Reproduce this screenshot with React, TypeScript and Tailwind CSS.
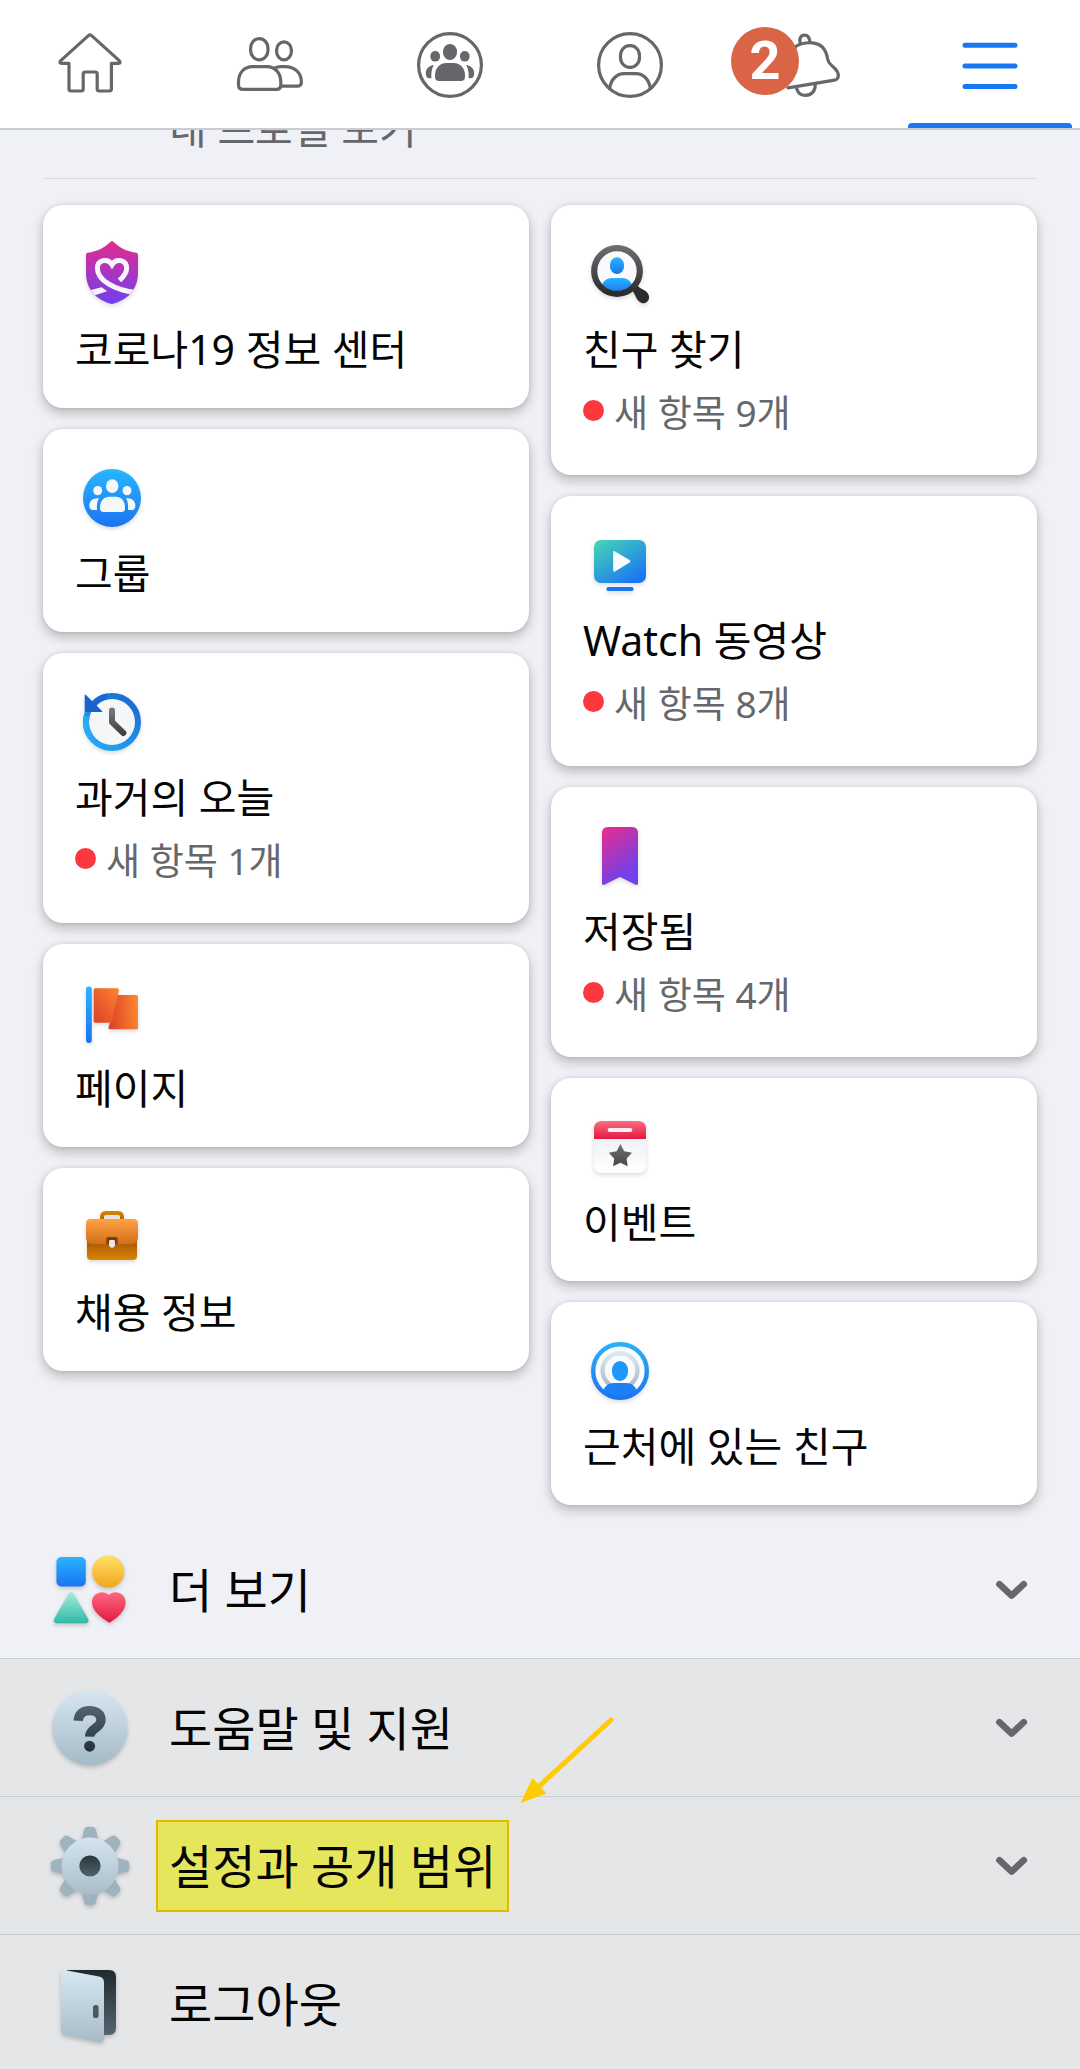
import React from 'react';

interface MenuCardData {
    label: string;
    icon: React.ReactNode;
    newItems?: number;
}

interface MenuRowProps {
    label: string;
    icon: React.ReactNode;
    expandable?: boolean;
    highlighted?: boolean;
    className?: string;
}

interface GradientProps {
    id: string;
    from: string;
    to: string;
}

const Gradient: React.FC<GradientProps> = ({ id, from, to }) => (
    <linearGradient id={id} x1="0" y1="0" x2="0" y2="1">
        <stop offset="0" stopColor={from} />
        <stop offset="1" stopColor={to} />
    </linearGradient>
);

/* ---------- top tab icons ---------- */

const TabIcon: React.FC<{ children: React.ReactNode; className?: string }> = ({
    children,
    className = 'text-[#65676b]'
}) => (
    <svg
        viewBox="0 0 80 80"
        className={`size-20 ${className}`}
        fill="none"
        stroke="currentColor"
        strokeWidth="3.2"
        strokeLinecap="round"
        strokeLinejoin="round"
        aria-hidden="true"
    >
        {children}
    </svg>
);

const HomeIcon = () => (
    <TabIcon>
        <path d="M38.4 11.6Q40 10.2 41.6 11.6L69 36.4Q71.6 39.4 68.2 39.4H61.4V65Q61.4 67 59.4 67H49.2Q47.2 67 47.2 65V50Q47.2 48 45.2 48H35.2Q33.2 48 33.2 50V65Q33.2 67 31.2 67H21Q19 67 19 65V39.4H11.8Q8.4 39.4 11 36.4Z" />
    </TabIcon>
);

const FriendsIcon = () => (
    <TabIcon>
        <rect x="20.6" y="14.6" width="17.4" height="21.2" rx="8.7" ry="9.6" />
        <rect x="46.6" y="17.9" width="14.8" height="17.9" rx="7.4" ry="8.2" />
        <path d="M8.5 58C8.5 48.5 14.5 42.6 22.5 42.6H37C45 42.6 50.8 49 50.8 58V61Q50.8 65.4 46.4 65.4H13Q8.5 65.4 8.5 61Z" />
        <path d="M44.6 44.2Q47.4 42.6 51 42.6H55C65 42.6 71.4 49 71.4 58Q71.4 62.2 67 62.2H51.4" />
    </TabIcon>
);

const GroupsIcon = () => (
    <TabIcon>
        <circle cx="40" cy="41" r="31.4" />
        <g fill="currentColor" stroke="none">
            <rect x="33" y="20" width="14" height="16" rx="7" ry="7.6" />
            <rect x="20.4" y="27" width="9.6" height="10.6" rx="4.8" />
            <rect x="50" y="27" width="9.6" height="10.6" rx="4.8" />
            <path d="M25 51C25 44 30 39 36 39H44C50 39 55 44 55 51V53Q55 57 51 57H29Q25 57 25 53Z" />
            <path d="M23.8 41C19 41.5 15.8 45 15.8 49Q15.8 54.3 19.5 54.3H21.4C21 49 21.6 45 23.8 41Z" />
            <path d="M56.2 41C61 41.5 64.2 45 64.2 49Q64.2 54.3 60.5 54.3H58.6C59 49 58.4 45 56.2 41Z" />
        </g>
    </TabIcon>
);

const ProfileIcon = () => (
    <TabIcon>
        <circle cx="40" cy="41" r="31.4" />
        <rect x="30.5" y="21.6" width="19" height="21.8" rx="9.2" ry="10" />
        <path d="M19.6 64.6C21 55 27 49.6 34 49.6H46C53 49.6 59 55 60.4 64.6" />
    </TabIcon>
);

const BellIcon = () => (
    <TabIcon>
        <path d="M30.4 19.5C28.6 14.4 31 11.2 34.6 11.2C38 11.2 39.4 13.6 39.8 17.4" />
        <path d="M18 63.8L64.6 56.2C69.6 55 69.4 49 65 44.6C60 39.6 58.6 40 57.6 35C56.4 27 53 19.4 42 18.8C35 18.4 29 20 25 23" />
        <path d="M26.6 64.4C28 68.8 31 71.4 35.4 71.4C41.4 71.4 45.6 67 45.2 60.6" />
    </TabIcon>
);

const HamburgerIcon = () => (
    <TabIcon className="text-[#1877f2]">
        <path strokeWidth="5" d="M15 21.2H65M15 42H65M15 62.6H65" />
    </TabIcon>
);

/* ---------- card icons ---------- */

const CardIcon: React.FC<{ children: React.ReactNode }> = ({ children }) => (
    <svg
        viewBox="0 0 74 74"
        className="size-[74px] drop-shadow-[0_2px_2px_rgba(0,0,0,0.15)]"
        fill="none"
        aria-hidden="true"
    >
        {children}
    </svg>
);

const SHIELD = 'M35.6 4.8Q37 3.4 38.4 4.8C45 11.4 52 14.4 61.4 15.8Q63 16.1 63 17.8V36C63 52 53 63 37 67C21 63 11 52 11 36V17.8Q11 16.1 12.6 15.8C22 14.4 29 11.4 35.6 4.8Z';

const CovidIcon = () => (
    <CardIcon>
        <defs>
            <Gradient id="shield" from="#e42c8f" to="#6f3ff0" />
            <clipPath id="shieldClip">
                <path d={SHIELD} />
            </clipPath>
        </defs>
        <path d={SHIELD} fill="url(#shield)" />
        <g clipPath="url(#shieldClip)">
            <path
                d="M44.4 43.4C48.6 39.6 51.6 36 51.6 31.4C51.6 22.4 41 21 37 27.6C33 21 22.4 22.4 22.4 31.4C22.4 42.4 39 53.8 62 55.6"
                stroke="#f7f5fb"
                strokeWidth="5"
            />
            <path d="M10 54.6L26.6 50.2L32.2 54.2L19 58.4Z" fill="#f7f5fb" />
        </g>
    </CardIcon>
);

const GroupCardIcon = () => (
    <CardIcon>
        <defs>
            <Gradient id="groupBlue" from="#28b6ff" to="#1b74f2" />
        </defs>
        <circle cx="37" cy="37" r="29" fill="url(#groupBlue)" />
        <g fill="#f5f8fb">
            <rect x="31" y="18.3" width="12.4" height="13.8" rx="6.2" ry="6.8" />
            <rect x="18.3" y="25" width="8.8" height="9.2" rx="4.4" />
            <rect x="47.6" y="25" width="8.8" height="9.2" rx="4.4" />
            <path d="M25 46.4C25 39.6 29.4 35.7 34 35.7H41C45.6 35.7 50 39.6 50 46.4V47.6Q50 51 46.6 51H28.4Q25 51 25 47.6Z" />
            <path d="M24 37.3C18 36.6 14.3 40 14.3 44.6Q14.3 49 18 49H22C21.6 44 22 40.6 24 37.3Z" />
            <path d="M51 37.3C57 36.6 60.4 40 60.4 44.6Q60.4 49 57 49H53C53.4 44 53 40.6 51 37.3Z" />
        </g>
    </CardIcon>
);

const HistoryIcon = () => (
    <CardIcon>
        <defs>
            <linearGradient id="historyRing" x1="1" y1="0" x2="0.3" y2="1">
                <stop offset="0" stopColor="#1a66d2" />
                <stop offset="1" stopColor="#25a4f2" />
            </linearGradient>
            <Gradient id="historyHands" from="#75777a" to="#3f4042" />
        </defs>
        <circle cx="37" cy="37" r="24" fill="#f5f6f8" />
        <circle cx="37" cy="37" r="26" stroke="url(#historyRing)" strokeWidth="6" />
        <path d="M11.4 31.5A26 26 0 0 0 16 52" stroke="#28aaf5" strokeWidth="6" />
        <path d="M17 20L23 26" stroke="#fff" strokeWidth="10" />
        <path d="M18.4 19.8C22 15.4 26 12.6 32 11.4" stroke="#1a66d2" strokeWidth="6" />
        <path d="M9.7 10.6Q9.7 8.8 11 10L26.8 25.8Q28 27 26 27H9.7Z" fill="#1a60d0" />
        <path
            d="M37 25.6V37L48.4 48"
            stroke="url(#historyHands)"
            strokeWidth="6"
            strokeLinecap="round"
            strokeLinejoin="round"
        />
    </CardIcon>
);

const PagesIcon = () => (
    <CardIcon>
        <defs>
            <Gradient id="pole" from="#2ab4ff" to="#1b72f0" />
            <linearGradient id="flagFront" x1="1" y1="0" x2="0" y2="1">
                <stop offset="0" stopColor="#fd832d" />
                <stop offset="1" stopColor="#dd412a" />
            </linearGradient>
            <linearGradient id="flagBack" x1="0" y1="0.5" x2="1" y2="0.4">
                <stop offset="0" stopColor="#dd412a" />
                <stop offset="1" stopColor="#fe872e" />
            </linearGradient>
        </defs>
        <rect x="11" y="10.6" width="5.8" height="56.4" rx="2.9" fill="url(#pole)" />
        <path d="M42 19H61.4Q63 19 63 20.6V51.7Q63 53.3 61.4 53.3H35Q33.2 53.3 33.6 51.6Z" fill="url(#flagBack)" />
        <path d="M20.4 12.3H42Q44.2 12.3 43.9 14.6L36.4 46.7H20.4Q18.7 46.7 18.7 45V14Q18.7 12.3 20.4 12.3Z" fill="url(#flagFront)" />
    </CardIcon>
);

const JobsIcon = () => (
    <CardIcon>
        <defs>
            <Gradient id="caseFlap" from="#ffa346" to="#d26f1a" />
            <Gradient id="caseBody" from="#8d3b02" to="#d98704" />
            <Gradient id="caseHandle" from="#d38205" to="#b16002" />
        </defs>
        <rect x="28" y="14" width="18" height="7" fill="#e4e4e6" />
        <path d="M27 21V17Q27 13 31 13H43Q47 13 47 17V21" stroke="url(#caseHandle)" strokeWidth="4" />
        <path d="M12 30H62V56Q62 60 58 60H16Q12 60 12 56Z" fill="url(#caseBody)" />
        <path d="M15.5 19H58.5Q63 19 63 23.5V37Q63 44 56.6 44H17.4Q11 44 11 37V23.5Q11 19 15.5 19Z" fill="url(#caseFlap)" />
        <path d="M31.3 44V39Q31.3 37 33.3 37H40.7Q42.7 37 42.7 39V44Z" fill="#7f3b0a" />
        <path d="M34 41.4Q34 40 35.4 40H38.6Q40 40 40 41.4V44.6Q40 47.7 37 47.7Q34 47.7 34 44.6Z" fill="#e6e6e8" />
    </CardIcon>
);

const FindFriendsIcon = () => (
    <CardIcon>
        <defs>
            <Gradient id="lens" from="#6a6b6e" to="#2a2b2d" />
            <Gradient id="lensPerson" from="#29b3ff" to="#1b74f2" />
            <clipPath id="lensClip">
                <circle cx="34" cy="34" r="20" />
            </clipPath>
        </defs>
        <path d="M48 52L52.6 46.4C55 50 58 51.4 62.6 54C66.6 57 67 61.6 64.4 64.4C61.4 67.2 57.4 66.6 54.6 63C52 58.6 51 55.4 48 52Z" fill="#2b2c2e" />
        <circle cx="34" cy="34" r="20" fill="#f8fafc" />
        <g clipPath="url(#lensClip)" fill="url(#lensPerson)">
            <rect x="27" y="20.3" width="14" height="16.8" rx="7" ry="7.6" />
            <path d="M18 50C20 44 24 41 28.6 41H39.4C44 41 48 44 50 50V56H18Z" />
        </g>
        <circle cx="34" cy="34" r="22.8" stroke="url(#lens)" strokeWidth="6.2" />
    </CardIcon>
);

const WatchIcon = () => (
    <CardIcon>
        <defs>
            <linearGradient id="screen" x1="0.1" y1="0" x2="0.8" y2="0.95">
                <stop offset="0" stopColor="#45d3b6" />
                <stop offset="1" stopColor="#1a76f2" />
            </linearGradient>
        </defs>
        <rect x="11" y="12" width="52" height="43" rx="7" fill="url(#screen)" />
        <path d="M30.2 24.4Q30.2 22.4 32 23.4L46.6 32Q48.4 33.3 46.6 34.6L32 43.4Q30.2 44.4 30.2 42.4Z" fill="#f8fbff" />
        <rect x="23.3" y="59" width="27.4" height="4" rx="2" fill="#1b76ee" />
    </CardIcon>
);

const SavedIcon = () => (
    <CardIcon>
        <defs>
            <linearGradient id="bookmark" x1="0.2" y1="0" x2="0.6" y2="0.85">
                <stop offset="0" stopColor="#e22d92" />
                <stop offset="1" stopColor="#7340ea" />
            </linearGradient>
        </defs>
        <path d="M25 8H49Q55 8 55 14V64Q55 67 52.2 65.6L37 58L21.8 65.6Q19 67 19 64V14Q19 8 25 8Z" fill="url(#bookmark)" />
    </CardIcon>
);

const EventsIcon = () => (
    <CardIcon>
        <defs>
            <Gradient id="calTop" from="#ff6a82" to="#e01b40" />
            <Gradient id="calPage" from="#eff1f4" to="#ffffff" />
            <Gradient id="calStar" from="#6c6e71" to="#46484a" />
        </defs>
        <path d="M11 28H63V56Q63 63 56 63H18Q11 63 11 56Z" fill="url(#calPage)" />
        <path d="M19 11H55Q63 11 63 19V29H11V19Q11 11 19 11Z" fill="url(#calTop)" />
        <rect x="24.6" y="18" width="24.8" height="4" rx="2" fill="#ffeef1" />
        <path
            d="M37.4 34L41.2 41.2L49 42.7L43.6 48.4L44.7 56.2L37.4 52.8L30.1 56.2L31.2 48.4L25.8 42.7L33.6 41.2Z"
            fill="url(#calStar)"
        />
    </CardIcon>
);

const NearbyIcon = () => (
    <CardIcon>
        <defs>
            <Gradient id="nearRing" from="#2cb0f5" to="#1b74f2" />
            <Gradient id="nearInner" from="#dce8ef" to="#a8b9c4" />
            <clipPath id="nearClip">
                <circle cx="37" cy="37" r="28" />
            </clipPath>
        </defs>
        <circle cx="37" cy="37" r="27" fill="#f9fbfc" />
        <circle cx="37" cy="36.6" r="17.4" stroke="url(#nearInner)" strokeWidth="4.4" />
        <rect x="29" y="27" width="16" height="20" rx="8" ry="9" fill="#2196fa" />
        <path
            d="M20 58C21 52 26 49 31 49H43C48 49 53 52 54 58V68H20Z"
            fill="#1b7ff5"
            clipPath="url(#nearClip)"
        />
        <circle cx="37" cy="37" r="26.8" stroke="url(#nearRing)" strokeWidth="4.4" />
    </CardIcon>
);

/* ---------- list icons ---------- */

const RowIcon: React.FC<{ children: React.ReactNode }> = ({ children }) => (
    <svg
        viewBox="0 0 80 80"
        className="size-20 shrink-0 overflow-visible drop-shadow-[0_2px_2px_rgba(0,0,0,0.2)]"
        fill="none"
        aria-hidden="true"
    >
        {children}
    </svg>
);

const ShapesIcon = () => (
    <RowIcon>
        <defs>
            <Gradient id="shapeBlue" from="#29b4ff" to="#1a74f1" />
            <Gradient id="shapeYellow" from="#ffe268" to="#f2a51c" />
            <Gradient id="shapeGreen" from="#a2ecdd" to="#31b9a5" />
            <Gradient id="shapeRed" from="#ff6681" to="#e01a3f" />
        </defs>
        <rect x="6.4" y="7" width="29.4" height="29.4" rx="5" fill="url(#shapeBlue)" />
        <circle cx="58.2" cy="21.5" r="16.1" fill="url(#shapeYellow)" />
        <path d="M18.4 44.2Q21.2 40 24 44.2L38 68.4Q40 73.2 35.2 73.2H7.2Q2.4 73.2 4.4 68.4Z" fill="url(#shapeGreen)" />
        <path d="M58.8 72.4Q59.4 72.8 60 72.4C67.6 67.4 75.6 60.6 75.6 52.4C75.6 42.2 63.6 39.6 58.8 45C54 39.6 42 42.2 42 52.4C42 60.6 51 67.6 58.8 72.4Z" fill="url(#shapeRed)" />
    </RowIcon>
);

const HelpIcon = () => (
    <RowIcon>
        <defs>
            <Gradient id="helpDisc" from="#d5e6f0" to="#a5bac6" />
            <linearGradient id="helpMark" gradientUnits="userSpaceOnUse" x1="40" y1="17" x2="40" y2="64">
                <stop offset="0" stopColor="#54656e" />
                <stop offset="1" stopColor="#23303a" />
            </linearGradient>
        </defs>
        <circle cx="40" cy="40" r="37.4" fill="url(#helpDisc)" />
        <path
            d="M28.2 32.8C28.6 25.6 33 22.6 39.6 22.6C46.6 22.6 51 26.2 51 32C51 40.6 40 39.6 39.6 48.6"
            stroke="url(#helpMark)"
            strokeWidth="9.4"
        />
        <circle cx="39.6" cy="58.2" r="5.5" fill="url(#helpMark)" />
    </RowIcon>
);

const GearIcon = () => (
    <RowIcon>
        <defs>
            <Gradient id="gearDisc" from="#d4e5ef" to="#a9bdc8" />
            <Gradient id="gearHole" from="#2b363c" to="#51636b" />
        </defs>
        {[0, 45, 90, 135, 180, 225, 270, 315].map((angle) => (
            <path
                key={angle}
                d="M31.6 14L34.2 3.4Q35 0.8 37.6 0.8H42.4Q45 0.8 45.8 3.4L48.4 14Z"
                fill="#9fb3be"
                transform={`rotate(${angle} 40 40)`}
            />
        ))}
        <circle cx="40" cy="40" r="28.4" fill="url(#gearDisc)" />
        <circle cx="40" cy="40" r="10.6" fill="url(#gearHole)" />
    </RowIcon>
);

const DoorIcon = () => (
    <RowIcon>
        <defs>
            <Gradient id="doorFrame" from="#20292e" to="#53656e" />
            <Gradient id="doorPanel" from="#d6e7f2" to="#a7bbc6" />
        </defs>
        <path d="M17 6H59Q66 6 66 13V64Q66 71 59 71H17Z" fill="url(#doorFrame)" />
        <path d="M11 11Q11 5.4 17 6.4L49 12.6Q54 13.6 54 18.6V74Q54 79.4 48.6 78.2L15.4 71.6Q11 70.6 11 66Z" fill="url(#doorPanel)" />
        <rect x="43" y="41" width="5.6" height="13" rx="2.6" fill="#4a5a63" />
    </RowIcon>
);

const ChevronDown = () => (
    <svg viewBox="0 0 40 40" className="size-10 shrink-0" fill="none" aria-hidden="true">
        <path
            d="M7.4 14.2L19.6 25.6L31.8 14.2"
            stroke="#65676b"
            strokeWidth="6.6"
            strokeLinecap="round"
            strokeLinejoin="round"
        />
    </svg>
);

/* ---------- layout pieces ---------- */

const tabs = [
    { label: '홈', icon: <HomeIcon /> },
    { label: '친구', icon: <FriendsIcon /> },
    { label: '그룹', icon: <GroupsIcon /> },
    { label: '프로필', icon: <ProfileIcon /> },
    { label: '알림', icon: <BellIcon />, badge: 2 },
    { label: '메뉴', icon: <HamburgerIcon />, active: true }
];

const leftCards: MenuCardData[] = [
    { label: '코로나19 정보 센터', icon: <CovidIcon /> },
    { label: '그룹', icon: <GroupCardIcon /> },
    { label: '과거의 오늘', icon: <HistoryIcon />, newItems: 1 },
    { label: '페이지', icon: <PagesIcon /> },
    { label: '채용 정보', icon: <JobsIcon /> }
];

const rightCards: MenuCardData[] = [
    { label: '친구 찾기', icon: <FindFriendsIcon />, newItems: 9 },
    { label: 'Watch 동영상', icon: <WatchIcon />, newItems: 8 },
    { label: '저장됨', icon: <SavedIcon />, newItems: 4 },
    { label: '이벤트', icon: <EventsIcon /> },
    { label: '근처에 있는 친구', icon: <NearbyIcon /> }
];

const MenuCard: React.FC<MenuCardData> = ({ label, icon, newItems }) => (
    <button
        type="button"
        className="block w-full rounded-[20px] bg-white px-8 pt-8 pb-[35px] text-left shadow-[0_5px_12px_rgba(0,0,0,0.24),0_0_4px_rgba(0,0,0,0.08)]"
    >
        {icon}
        <span className="mt-[14px] block text-[41px] leading-[48px] text-[#050505]">{label}</span>
        {newItems !== undefined && (
            <span className="mt-4 mb-[3px] flex items-center gap-[10px] text-[37px] leading-[48px] text-[#65676b]">
                <span className="mb-[6px] size-[21px] rounded-full bg-[#fa383e]" />
                <span>새 항목 {newItems}개</span>
            </span>
        )}
    </button>
);

const MenuRow: React.FC<MenuRowProps> = ({ label, icon, expandable, highlighted, className = '' }) => (
    <button
        type="button"
        className={`flex w-full items-center pr-12 pl-[50px] text-left ${className}`}
    >
        {icon}
        <span className="relative isolate ml-[39px] text-[47px] leading-[56px] text-[#050505]">
            {highlighted && (
                <span className="absolute -inset-x-[13px] -inset-y-[18px] -z-10 border-2 border-[#e6b800] bg-[#e6e65c]" />
            )}
            {label}
        </span>
        <span className="grow" />
        {expandable && <ChevronDown />}
    </button>
);

export default function App() {
    return (
        <div className="min-h-screen bg-[#f0f1f6] font-['Noto_Sans','Noto_Sans_CJK_KR',sans-serif] font-normal">
            <header className="border-b-2 border-[#c9ccd1] bg-white">
                <nav className="grid h-32 grid-cols-6">
                    {tabs.map((tab) => (
                        <button
                            key={tab.label}
                            type="button"
                            aria-label={tab.label}
                            className="relative flex items-center justify-center"
                        >
                            {tab.icon}
                            {tab.badge && (
                                <span className="absolute top-[27px] left-[11px] flex size-[68px] items-center justify-center rounded-full bg-[#d96446] font-['Roboto',sans-serif] text-[54px] leading-none font-bold text-white">
                                    {tab.badge}
                                </span>
                            )}
                            {tab.active && (
                                <span className="absolute inset-x-2 bottom-0 h-[5px] rounded-t-[4px] bg-[#1877f2]" />
                            )}
                        </button>
                    ))}
                </nav>
            </header>

            <main>
                <div className="px-[43px]">
                    {/* profile link, scrolled half under the tab bar */}
                    <div className="flex h-[22px] items-end overflow-hidden pl-[126px]">
                        <a href="#profile" className="text-[41px] leading-[48px] text-[#65676b]">
                            내 프로필 보기
                        </a>
                    </div>
                    <hr className="mt-[26px] border-[#d8dade]" />
                    <div className="mt-[26px] grid grid-cols-2 items-start gap-[22px]">
                        <div className="flex flex-col gap-[21px]">
                            {leftCards.map((card) => (
                                <MenuCard key={card.label} {...card} />
                            ))}
                        </div>
                        <div className="flex flex-col gap-[21px]">
                            {rightCards.map((card) => (
                                <MenuCard key={card.label} {...card} />
                            ))}
                        </div>
                    </div>
                </div>

                <div className="mt-4">
                    <MenuRow
                        label="더 보기"
                        icon={<ShapesIcon />}
                        expandable
                        className="h-[138px] border-b border-[#c9ccd1]"
                    />
                    <div className="relative bg-[#e5e6e8]">
                        <MenuRow
                            label="도움말 및 지원"
                            icon={<HelpIcon />}
                            expandable
                            className="h-[138px] border-b border-[#c9ccd1]"
                        />
                        <MenuRow
                            label="설정과 공개 범위"
                            icon={<GearIcon />}
                            expandable
                            highlighted
                            className="h-[138px] border-b border-[#c9ccd1]"
                        />
                        <MenuRow label="로그아웃" icon={<DoorIcon />} className="h-[134px] pt-1" />
                        {/* pointer to the settings row */}
                        <svg
                            viewBox="0 0 100 92"
                            className="absolute top-[56px] left-[518px] h-[92px] w-[100px]"
                            fill="none"
                            aria-hidden="true"
                        >
                            <path d="M93 5L18 74" stroke="#ffcb05" strokeWidth="5" strokeLinecap="round" />
                            <path d="M2.5 88L14.5 63L28.5 78.5Z" fill="#ffcb05" />
                        </svg>
                    </div>
                </div>
            </main>
        </div>
    );
}
